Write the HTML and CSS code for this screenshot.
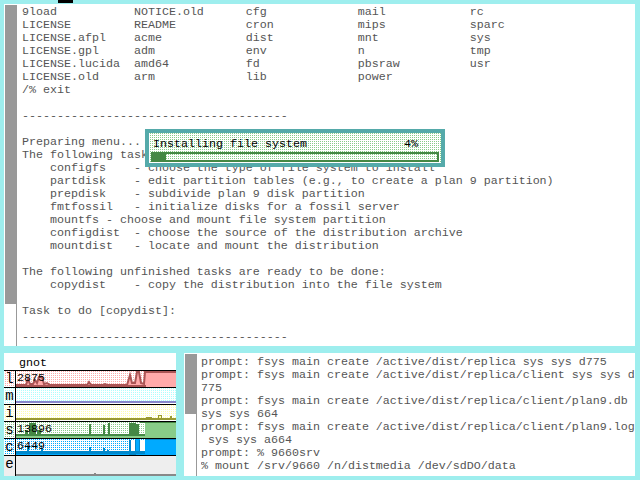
FILE: index.html
```html
<!DOCTYPE html>
<html>
<head>
<meta charset="utf-8">
<title>Plan 9 install</title>
<link rel="stylesheet" href="styles.css">
</head>
<body>
<div class="cursor-mark"></div>

<section class="window top-window">
  <div class="scroll"><div class="thumb top-thumb"></div></div>
<pre class="term">9load           NOTICE.old      cfg             mail            rc
LICENSE         README          cron            mips            sparc
LICENSE.afpl    acme            dist            mnt             sys
LICENSE.gpl     adm             env             n               tmp
LICENSE.lucida  amd64           fd              pbsraw          usr
LICENSE.old     arm             lib             power
/% exit

--------------------------------------

Preparing menu...
The following tasks are ready to be done:
    configfs    - choose the type of file system to install
    partdisk    - edit partition tables (e.g., to create a plan 9 partition)
    prepdisk    - subdivide plan 9 disk partition
    fmtfossil   - initialize disks for a fossil server
    mountfs - choose and mount file system partition
    configdist  - choose the source of the distribution archive
    mountdist   - locate and mount the distribution

The following unfinished tasks are ready to be done:
    copydist    - copy the distribution into the file system

Task to do [copydist]:

--------------------------------------</pre>
</section>

<aside class="dialog">
  <div class="dialog-head"><span>Installing file system</span><span class="pct">4%</span></div>
  <div class="bar"><div class="bar-fill"></div></div>
</aside>

<section class="window stats">
  <div class="stats-title">gnot</div>
  <div class="stat"><span class="stat-label dots-l">l</span><div class="graph dots-l"><span class="value">2875</span>
    <svg width="160" height="16">
      <path d="M0 15V14H10L12 8L14 13L17 13L19 9L21 12L23 6L26 6L28 13L31 12L34 14H71L73 11L75 14H87L89 13L91 14H111L114 4L116 12L119 12L121 1L123 1L125 12L128 13L129 1H160V17H129V15H0Z" fill="#ffaaaa" stroke="#aa5555" stroke-width="2"/>
      <rect x="130" y="2" width="31" height="15" fill="#ffaaaa"/>
    </svg></div></div>
  <div class="stat"><span class="stat-label dots-m">m</span><div class="graph dots-m">
    <svg width="160" height="16" shape-rendering="crispEdges">
      <rect y="13" width="160" height="2" fill="#8888cc"/>
    </svg></div></div>
  <div class="stat"><span class="stat-label dots-i">i</span><div class="graph dots-i">
    <svg width="160" height="16" shape-rendering="crispEdges">
      <path d="M0 13H130V12H136V13H142V10H146V13H154V11H156V13H160V15H0Z" fill="#999933"/>
      <rect x="143" y="11" width="2" height="2" fill="#ffffaa"/>
    </svg></div></div>
  <div class="stat"><span class="stat-label dots-s">s</span><div class="graph dots-s"><span class="value">13896</span>
    <svg width="160" height="16" shape-rendering="crispEdges">
      <path d="M0 14H129V16H0ZM129 1H160V16H129Z" fill="#88cc88"/>
      <path d="M0 12H129V14H0ZM13 1H20V12H13ZM9 8H12V12H9ZM21 8H25V12H21ZM73 2H75V12H73ZM87 3H89V12H87ZM92 1H94V12H92ZM113 1H120V14H113ZM120 2H123V14H120ZM124 0H160V1H124Z" fill="#448844"/>
    </svg></div></div>
  <div class="stat"><span class="stat-label dots-c">c</span><div class="graph dots-c"><span class="value">6449</span>
    <svg width="160" height="16" shape-rendering="crispEdges">
      <path d="M0 15H160V16H0ZM119 0H124V15H119ZM129 1H160V16H129Z" fill="#00aaff"/>
      <path d="M0 12H129V15H0ZM11 8H13V12H11ZM25 9H27V12H25ZM73 8H75V12H73ZM87 9H89V12H87ZM91 11H93V12H91ZM129 0H160V1H129ZM113 1H115V13H113ZM119 1H120V14H119ZM123 1H124V13H123ZM113 15H120V16H113Z" fill="#0088cc"/>
      <rect x="115" y="1" width="4" height="11" fill="#fff"/>
      <rect x="124" y="1" width="5" height="11" fill="#fff"/>
    </svg></div></div>
  <div class="stat stat-last"><span class="stat-label label-e">e</span><div class="graph label-e">
    <svg width="160" height="20" shape-rendering="crispEdges">
      <path d="M0 18H160V20H0ZM78 17H80V18H78Z" fill="#888888"/>
    </svg></div></div>
</section>

<section class="window log-window">
  <div class="scroll"><div class="thumb log-thumb"></div></div>
<pre class="term">prompt: fsys main create /active/dist/replica sys sys d775
prompt: fsys main create /active/dist/replica/client sys sys d
775
prompt: fsys main create /active/dist/replica/client/plan9.db
sys sys 664
prompt: fsys main create /active/dist/replica/client/plan9.log
 sys sys a664
prompt: % 9660srv
% mount /srv/9660 /n/distmedia /dev/sdDO/data</pre>
</section>
</body>
</html>
```

FILE: styles.css
```css
html, body {
  margin: 0;
  padding: 0;
  width: 640px;
  height: 480px;
  overflow: hidden;
  background: #9eeeee;
}
body {
  position: relative;
  font-family: "Liberation Mono", monospace;
  font-size: 11.67px;
  line-height: 13px;
}
.cursor-mark {
  position: absolute;
  left: 58px;
  top: 0;
  width: 15px;
  height: 3px;
  background: #000;
}
.window {
  position: absolute;
  display: flex;
  background: #fff;
}
.top-window {
  left: 4px;
  top: 4px;
  width: 631px;
  height: 342px;
}
.log-window {
  left: 184px;
  top: 353px;
  width: 451px;
  height: 123px;
}
.scroll {
  flex: none;
  width: 11px;
  margin: 1px 4px 0 1px;
  border-right: 1px solid #999;
}
.top-window .scroll {
  margin-right: 5px;
}
.thumb {
  background: #999;
}
.top-thumb {
  height: 299px;
}
.log-thumb {
  height: 60px;
}
.term {
  margin: 2px 0 0;
  font: inherit;
  color: #555;
  white-space: pre;
}
.log-window .term {
  margin-top: 3px;
  overflow: hidden;
}
.dialog {
  position: absolute;
  left: 145px;
  top: 129px;
  width: 288px;
  height: 25px;
  padding: 5px 2px 0;
  border: 4px solid #55aaaa;
  background-color: #fff;
  background-image: conic-gradient(#88cc88 25%, #fff 0);
  background-size: 2px 2px;
  color: #000;
}
.dialog-head {
  display: flex;
  justify-content: space-between;
  padding: 0 21px 0 2px;
  height: 14px;
}
.bar {
  height: 6px;
  border: 2px solid #448844;
  background-image: conic-gradient(#88cc88 25%, #fff 0);
  background-size: 2px 2px;
}
.bar-fill {
  width: 13px;
  height: 6px;
  background: #448844;
}
.stats {
  left: 4px;
  top: 353px;
  width: 172px;
  height: 123px;
  flex-direction: column;
  color: #000;
}
.stats-title {
  height: 17px;
  padding-left: 15px;
  line-height: 20px;
}
.stat {
  display: flex;
  height: 16px;
  border-top: 1px solid #000;
}
.stat-last {
  height: 20px;
}
.stat-label {
  flex: none;
  width: 11px;
  border-right: 1px solid #000;
  text-align: center;
  font-size: 14px;
  line-height: 16px;
}
.dots-l, .dots-m, .dots-i, .dots-s, .dots-c {
  background-size: 2px 2px;
}
.dots-l { background-image: conic-gradient(#ffaaaa 25%, #fff 0); }
.dots-m { background-image: conic-gradient(#aaffff 25%, #fff 0); }
.dots-i { background-image: conic-gradient(#ffffaa 25%, #fff 0); }
.dots-s { background-image: conic-gradient(#88cc88 25%, #fff 0); }
.dots-c { background-image: conic-gradient(#00aaff 25%, #fff 0); }
.label-e { background: #eeeeee; }
.graph {
  position: relative;
  width: 160px;
  overflow: hidden;
}
.graph svg {
  display: block;
}
.value {
  position: absolute;
  left: 1px;
  top: 1px;
  z-index: 1;
}
```
